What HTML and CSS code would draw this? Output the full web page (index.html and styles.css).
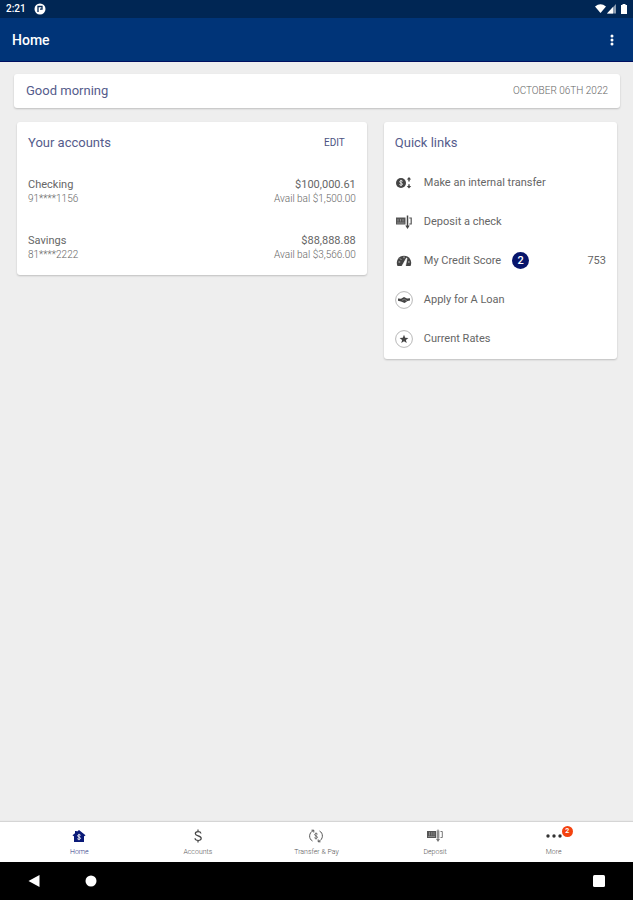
FILE: index.html
```html
<!DOCTYPE html>
<html lang="en">
<head>
    <meta charset="UTF-8">
    <meta name="viewport" content="width=device-width, initial-scale=1.0">
    <title>Home</title>
    <link rel="stylesheet" href="styles.css">
</head>
<body>

    <div class="status-bar">
        <span>2:21</span>
        <svg width="12" height="12" viewBox="0 0 12 12"><circle cx="6" cy="6" r="5.5" fill="#fff"/><path d="M4 9V3.5h4v2.7H6" fill="none" stroke="#002654" stroke-width="1.3"/></svg>
        <svg class="signals" width="34" height="12" viewBox="0 0 34 12" fill="#fff">
            <path d="M0 3.5Q5.5-1 11 3.5L5.500 10z"/>
            <path d="M12 10.500L21 1v9.500z" opacity=".55"/>
            <path d="M12 10.500L18 4v6.500z"/>
            <path d="M26 2h1.500V1h3v1H32v9h-6z"/>
        </svg>
    </div>

    <header class="app-bar">
        <h1>Home</h1>
        <button class="menu-button" aria-label="More options">
            <svg width="4" height="14" viewBox="0 0 4 14" fill="#fff"><circle cx="2" cy="3" r="1.500"/><circle cx="2" cy="7" r="1.500"/><circle cx="2" cy="11" r="1.500"/></svg>
        </button>
    </header>

    <main>
        <div class="card greeting">
            <h2>Good morning</h2>
            <span class="date">OCTOBER 06TH 2022</span>
        </div>

        <div class="columns">
            <section class="card accounts">
                <div class="card-header">
                    <h2>Your accounts</h2>
                    <button class="edit">EDIT</button>
                </div>
                <div class="account">
                    <span>Checking</span>
                    <span>$100,000.61</span>
                    <small>91****1156</small>
                    <small>Avail bal $1,500.00</small>
                </div>
                <div class="account">
                    <span>Savings</span>
                    <span>$88,888.88</span>
                    <small>81****2222</small>
                    <small>Avail bal $3,566.00</small>
                </div>
            </section>

            <section class="card links">
                <div class="card-header">
                    <h2>Quick links</h2>
                </div>
                <a class="link" href="#">
                    <svg width="18" height="18" viewBox="0 0 18 18">
                        <circle cx="6" cy="9" r="5" fill="#444"/>
                        <path d="M7.700 7.300C6.500 6 4.500 6.600 4.700 8c.2 1.200 2.700.8 2.800 2 .1 1.300-2 1.600-3.200.5M6 5.800v6.400" fill="none" stroke="#fff" stroke-width=".8"/>
                        <path d="M14 3l2.200 2.600h-1.500v2h-1.400v-2h-1.500zM14 14.500l2.200-2.400h-1.500v-1.800h-1.400v1.800h-1.500z" fill="#444"/>
                    </svg>
                    <span>Make an internal transfer</span>
                </a>
                <a class="link" href="#">
                    <svg width="18" height="18" viewBox="0 0 18 18">
                        <path d="M1 4.500h9.500v7H1z" fill="#555"/>
                        <path d="M2 10h7.500M3 6v2.500M5.500 6v2.500M8 6v2.500" stroke="#bbb" stroke-width=".6"/>
                        <path d="M12.500 2.500v11" stroke="#444" stroke-width="1.500"/>
                        <path d="M14.300 5h1.900v6h-1.900" fill="none" stroke="#555" stroke-width="1.200"/>
                        <path d="M10.300 12.500h4.400L12.500 16z" fill="#444"/>
                    </svg>
                    <span>Deposit a check</span>
                </a>
                <a class="link" href="#">
                    <svg width="18" height="18" viewBox="0 0 18 18">
                        <path d="M2.500 14A7.200 7.200 0 1 1 15.500 14z" fill="#444"/>
                        <path d="M7 14l4.500-8 .5.200L10.500 14zM3.500 10h1.700M5 6.500l1.200 1.200M9 4.500v1.700M13 10h1.700" fill="#fff" stroke="#fff" stroke-width=".7"/>
                    </svg>
                    <span>My Credit Score</span>
                    <b class="badge">2</b>
                    <span class="score">753</span>
                </a>
                <a class="link" href="#">
                    <svg width="18" height="18" viewBox="0 0 18 18">
                        <circle cx="9" cy="9" r="8.400" fill="#fff" stroke="#999" stroke-width=".7"/>
                        <path d="M3 7.500l3 .3L9 6l3 1.600 3-.3v2.200l-2.500.6L9.600 12 6 10.500l-3-.7z" fill="#444"/>
                        <path d="M7 9.300l2.500-1 2.500 1.700" fill="none" stroke="#bbb" stroke-width=".5"/>
                    </svg>
                    <span>Apply for A Loan</span>
                </a>
                <a class="link" href="#">
                    <svg width="18" height="18" viewBox="0 0 18 18">
                        <circle cx="9" cy="9" r="8.400" fill="#fff" stroke="#999" stroke-width=".7"/>
                        <path d="M9 4.800l1.200 2.900 3.200.2-2.500 2 .8 3.100L9 11.300 6.300 13l.8-3.100-2.500-2 3.200-.2z" fill="#444"/>
                    </svg>
                    <span>Current Rates</span>
                </a>
            </section>
        </div>
    </main>

    <nav class="tabs">
        <a class="tab active" href="#">
            <svg width="16" height="16" viewBox="0 0 16 16">
                <path d="M8 2l6.500 5.200-1 1-.5-.4V14H3V7.800l-.5.400-1-1L4 5.200V3h1.800v.800z" fill="#0a1a78"/>
                <path d="M9.700 7.300C8.500 6.300 6.500 6.700 6.600 8c.1 1.200 2.900.9 2.900 2.200 0 1.300-2 1.500-3.200.5M8 5.800v6.400" fill="none" stroke="#fff" stroke-width=".9"/>
            </svg>
            <span>Home</span>
        </a>
        <a class="tab" href="#">
            <svg width="16" height="16" viewBox="0 0 16 16" fill="none" stroke="#444" stroke-width="1.200">
                <path d="M11 5.500C10.500 3 5.300 3 5.300 5.700c0 2.600 5.900 1.800 5.900 4.600 0 2.900-6 2.900-6.200 0M8 1.500v2.200M8 12.300v2.200"/>
            </svg>
            <span>Accounts</span>
        </a>
        <a class="tab" href="#">
            <svg width="16" height="16" viewBox="0 0 16 16" fill="none" stroke="#555">
                <path d="M5.500 2.500C.5 4.500.5 11 4.500 13M10.500 13.500c5-2 5-8.500 1-10.500M3.500 2.200h2.300v2.300M12.500 13.800h-2.300v-2.300"/>
                <path d="M9.700 6.200C8.500 5 6.500 5.500 6.600 6.800c.1 1.300 2.900 1 2.900 2.400 0 1.300-2 1.600-3.200.500M8 4.500v7" stroke-width=".8"/>
            </svg>
            <span>Transfer &amp; Pay</span>
        </a>
        <a class="tab" href="#">
            <svg width="16" height="16" viewBox="0 0 16 16">
                <path d="M0 3h9v7H0z" fill="#555"/>
                <path d="M1 8.500h7M2.500 4v3.500M4.800 4v3.500M7 4v3.500" stroke="#aaa" stroke-width=".6"/>
                <path d="M9.500 2.500h3v8h-3z" fill="#aaa"/>
                <path d="M11 1.500v10M13.500 3.500h1.800v6h-1.800" fill="none" stroke="#777"/>
                <path d="M9 11h4l-2 3z" fill="#777"/>
            </svg>
            <span>Deposit</span>
        </a>
        <a class="tab" href="#">
            <svg width="16" height="16" viewBox="0 0 16 16" fill="#333"><circle cx="2" cy="8" r="1.700"/><circle cx="8" cy="8" r="1.700"/><circle cx="14" cy="8" r="1.700"/></svg>
            <span>More</span>
            <b class="alert">2</b>
        </a>
    </nav>

    <div class="system-bar">
        <button aria-label="Back"><svg width="12" height="14" viewBox="0 0 12 14"><path d="M11.500 1v12L.5 7z" fill="#fff"/></svg></button>
        <button aria-label="Home screen"><svg width="12" height="12" viewBox="0 0 12 12"><circle cx="6" cy="6" r="5.500" fill="#fff"/></svg></button>
        <button class="recent" aria-label="Recent apps"><svg width="12" height="12" viewBox="0 0 12 12"><rect width="12" height="12" rx="1.500" fill="#fff"/></svg></button>
    </div>

</body>
</html>
```
FILE: styles.css
```css
* {
    box-sizing: border-box;
}

body {
    display: flex;
    flex-direction: column;
    min-height: 100vh;
    margin: 0;
    background: #eeeeee;
    color: #666666;
    font-family: Roboto, sans-serif;
    font-size: 11px;
    line-height: 16px;
}

h1, h2 {
    margin: 0;
}

h2 {
    color: #555c8c;
    font-size: 13px;
    font-weight: 400;
}

button {
    padding: 0;
    border: 0;
    background: none;
    font-family: inherit;
}

svg {
    display: block;
    flex: none;
}

a {
    color: inherit;
    text-decoration: none;
}

.status-bar {
    display: flex;
    align-items: center;
    gap: 8px;
    height: 18px;
    padding: 0 4px 0 6px;
    background: #002654;
    color: #ffffff;
    font-size: 10px;
    font-weight: 500;
}

.signals {
    margin-left: auto;
}

.app-bar {
    display: flex;
    align-items: center;
    justify-content: space-between;
    height: 44px;
    padding: 0 19px 0 12px;
    border-bottom: 1px solid #000f60;
    background: #003478;
    color: #ffffff;
}

.app-bar h1 {
    font-size: 14px;
    font-weight: 500;
}

main {
    flex: 1;
    padding: 12px 13px 12px 14px;
}

.card {
    border-radius: 3px;
    background: #ffffff;
    box-shadow: 0 1px 2px rgba(0, 0, 0, 0.2);
}

.greeting {
    display: flex;
    align-items: center;
    justify-content: space-between;
    height: 34px;
    padding: 0 12px;
}

.date {
    color: #666666;
    font-size: 10px;
    font-weight: 300;
}

.columns {
    display: grid;
    grid-template-columns: 3fr 2fr;
    align-items: start;
    gap: 17px;
    padding: 14px 3px;
}

.card-header {
    display: flex;
    align-items: center;
    justify-content: space-between;
    height: 41px;
}

/* Accounts */
.accounts {
    padding: 0 11px;
}

.edit {
    margin-right: 11px;
    color: #4c5382;
    font-size: 10px;
}

.account {
    display: grid;
    grid-template-columns: 1fr auto;
    align-content: center;
    height: 56px;
}

.account :nth-child(even) {
    text-align: right;
}

.account small {
    font-size: 10px;
    font-weight: 300;
    line-height: 12px;
}

/* Quick links */
.links {
    padding-bottom: 1px;
}

.links .card-header {
    padding: 0 11px;
}

.link {
    display: flex;
    align-items: center;
    gap: 11px;
    height: 39px;
    padding: 0 11px;
}

.badge {
    width: 17px;
    border-radius: 50%;
    background: #07156b;
    color: #ffffff;
    font-weight: 500;
    line-height: 17px;
    text-align: center;
}

.score {
    margin-left: auto;
}

/* Bottom navigation */
.tabs {
    display: flex;
    height: 40px;
    padding: 0 20px;
    background: #ffffff;
    box-shadow: 0 -1px 1px rgba(0, 0, 0, 0.1);
}

.tab {
    position: relative;
    display: flex;
    flex: 1;
    flex-direction: column;
    align-items: center;
    padding-top: 6px;
    color: #555555;
    font-size: 7px;
    font-weight: 300;
}

.active {
    color: #2c3582;
}

.alert {
    position: absolute;
    top: 4px;
    left: calc(50% + 8px);
    width: 11px;
    border-radius: 50%;
    background: #f4430f;
    color: #ffffff;
    font-weight: 700;
    line-height: 11px;
    text-align: center;
}

.system-bar {
    display: flex;
    align-items: center;
    gap: 45px;
    height: 38px;
    padding: 0 28px;
    background: #000000;
}

.recent {
    margin-left: auto;
}
```
